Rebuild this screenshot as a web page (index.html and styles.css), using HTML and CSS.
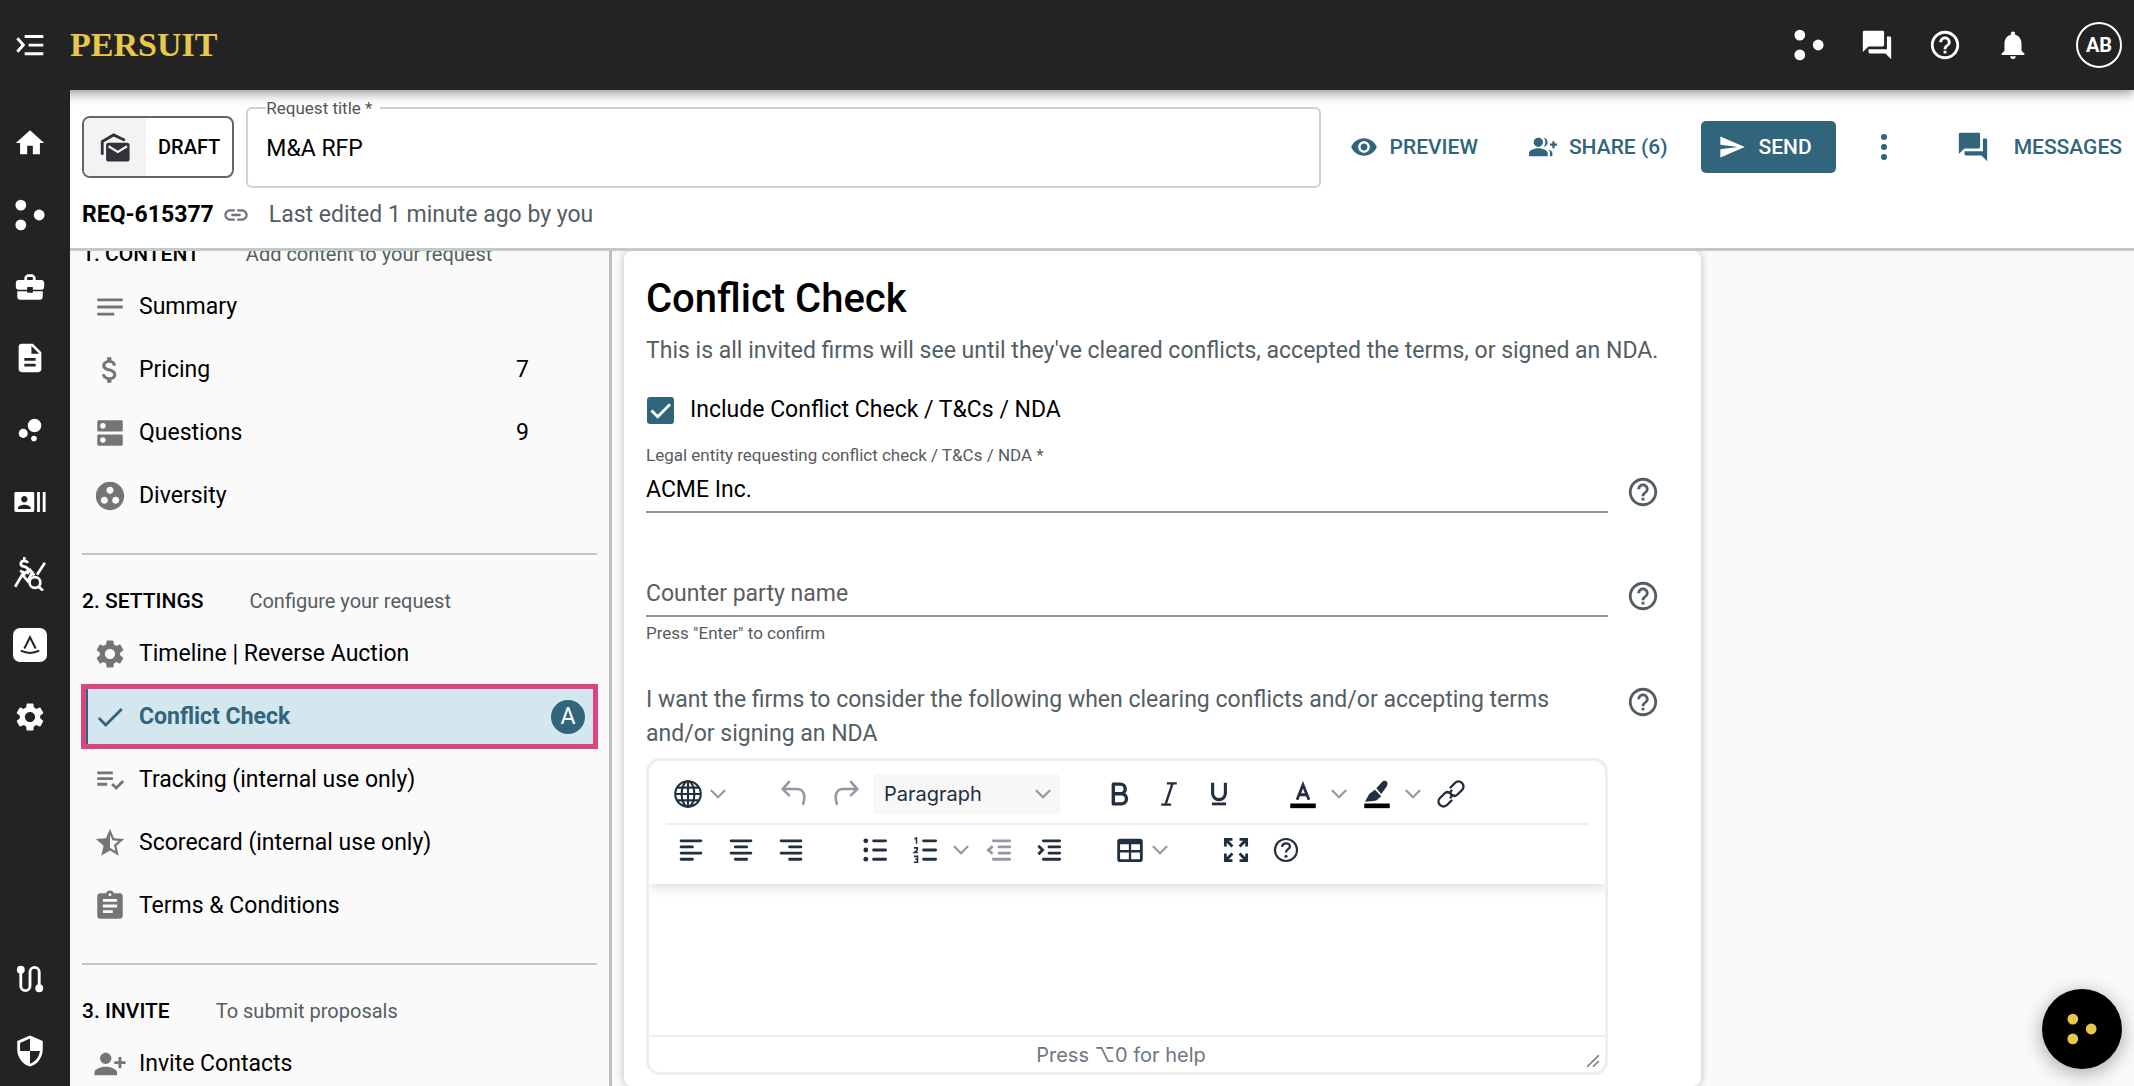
FILE: index.html
```html
<!DOCTYPE html>
<html lang="en">
<head>
    <meta charset="UTF-8">
    <meta name="viewport" content="width=device-width, initial-scale=1">
    <title>Conflict Check - M&amp;A RFP</title>
    <link rel="stylesheet" href="styles.css">
</head>
<body>
<!-- Icon sprite -->
<svg class="sprite" aria-hidden="true">
    <symbol id="i-menu" viewBox="0 0 24 24"><path d="M8 4.500h14v2.200H8zM11 11h11v2.200H11zM8 17.500h14v2.200H8z"/><path d="M2.500 7l4.500 5-4.500 5" fill="none" stroke="currentColor" stroke-width="2.200"/></symbol>
    <symbol id="i-home" viewBox="0 0 24 24"><path d="M10 20v-6h4v6h5v-8h3L12 3 2 12h3v8z"/></symbol>
    <symbol id="i-dots" viewBox="0 0 24 24"><circle cx="5.500" cy="5" r="3.800"/><circle cx="5.500" cy="19" r="3.800"/><circle cx="18.500" cy="12" r="3.800"/></symbol>
    <symbol id="i-case" viewBox="0 0 24 24"><path d="M10 16v-1H3.010L3 19c0 1.110.89 2 2 2h14c1.110 0 2-.89 2-2v-4h-7v1h-4zm10-9h-4.010V5l-2-2h-4l-2 2v2H4c-1.100 0-2 .9-2 2v3c0 1.110.89 2 2 2h6v-2h4v2h6c1.100 0 2-.9 2-2V9c0-1.100-.9-2-2-2zm-6 0h-4V5h4v2z"/></symbol>
    <symbol id="i-doc" viewBox="0 0 24 24"><path d="M14 2H6c-1.100 0-1.990.9-1.990 2L4 20c0 1.100.89 2 1.990 2H18c1.100 0 2-.9 2-2V8l-6-6zm2 16H8v-2h8v2zm0-4H8v-2h8v2zm-3-5V3.500L18.500 9H13z"/></symbol>
    <symbol id="i-bubbles" viewBox="0 0 24 24"><circle cx="7.200" cy="14.400" r="3.200"/><circle cx="14.800" cy="18" r="2"/><circle cx="15.200" cy="8.800" r="4.800"/></symbol>
    <symbol id="i-contacts" viewBox="0 0 24 24"><path d="M21 5v14h2V5h-2zm-4 14h2V5h-2v14zM14 5H2c-.55 0-1 .45-1 1v12c0 .55.45 1 1 1h12c.55 0 1-.45 1-1V6c0-.55-.45-1-1-1zM8 7.750c1.240 0 2.250 1.010 2.250 2.250S9.240 12.250 8 12.250 5.750 11.240 5.750 10 6.760 7.750 8 7.750zM12.500 17h-9v-.75c0-1.500 3-2.250 4.500-2.250s4.500.75 4.500 2.250V17z"/></symbol>
    <symbol id="i-insight" viewBox="0 0 24 24"><g fill="none" stroke="currentColor" stroke-width="1.900"><path d="M10.500 4.200Q9.800 2.800 8 2.800 5.500 2.900 5.500 4.800 5.600 6.400 8 6.800 10.600 7.300 10.600 9.200 10.500 11 8 11 6 11 5.300 9.400M8 0v3M8 11v2M1.500 21l5-8.500 4 4.500 3.500-7M10 12l2-3 3 4M17 12.500l5.500-8.500"/><circle cx="15.500" cy="18" r="3.800"/><path d="M18 20.800l3.200 3"/></g></symbol>
    <symbol id="i-brand" viewBox="0 0 24 24"><rect x="0" y="0" width="24" height="24" rx="5"/><path d="M8 14.500L12 6.500l4 8M5.500 16q6.500 3.200 13 0" fill="none" stroke="#232323" stroke-width="1.400"/></symbol>
    <symbol id="i-gear" viewBox="0 0 24 24"><path d="M19.140 12.940c.04-.3.06-.61.06-.94 0-.32-.02-.64-.07-.94l2.030-1.580c.18-.14.23-.41.12-.61l-1.920-3.320c-.12-.22-.37-.29-.59-.22l-2.390.96c-.5-.38-1.030-.7-1.620-.94l-.36-2.540c-.04-.24-.24-.41-.48-.41h-3.840c-.24 0-.43.17-.47.41l-.36 2.540c-.59.24-1.130.57-1.620.94l-2.390-.96c-.22-.08-.47 0-.59.22L2.740 8.870c-.12.21-.08.47.12.61l2.030 1.580c-.05.3-.09.63-.09.94s.02.64.07.94l-2.030 1.580c-.18.14-.23.41-.12.61l1.920 3.320c.12.22.37.29.59.22l2.390-.96c.5.38 1.030.7 1.620.94l.36 2.540c.05.24.24.41.48.41h3.840c.24 0 .44-.17.47-.41l.36-2.540c.59-.24 1.130-.56 1.620-.94l2.390.96c.22.08.47 0 .59-.22l1.920-3.320c.12-.22.07-.47-.12-.61l-2.010-1.580zM12 15.600c-1.980 0-3.600-1.620-3.600-3.600s1.620-3.600 3.600-3.600 3.600 1.620 3.600 3.600-1.620 3.600-3.600 3.600z"/></symbol>
    <symbol id="i-route" viewBox="0 0 24 24"><circle cx="5.500" cy="5.500" r="2.800"/><circle cx="18.500" cy="18.500" r="2.800"/><path d="M5.500 6v11a3.250 3.250 0 0 0 6.500 0V7a3.250 3.250 0 0 1 6.500 0v11" fill="none" stroke="currentColor" stroke-width="2"/></symbol>
    <symbol id="i-shield" viewBox="0 0 24 24"><path d="M12 1L3 5v6c0 5.550 3.840 10.740 9 12 5.160-1.260 9-6.450 9-12V5l-9-4zm0 10.990h7c-.53 4.120-3.280 7.790-7 8.940V12H5V6.300l7-3.110v8.800z"/></symbol>
    <symbol id="i-forum" viewBox="0 0 24 24"><path d="M21 6h-2v9H6v2c0 .55.45 1 1 1h11l4 4V7c0-.55-.45-1-1-1zm-4 6V3c0-.55-.45-1-1-1H3c-.55 0-1 .45-1 1v14l4-4h10c.55 0 1-.45 1-1z"/></symbol>
    <symbol id="i-help" viewBox="0 0 24 24"><path d="M11 18h2v-2h-2v2zm1-16C6.480 2 2 6.480 2 12s4.480 10 10 10 10-4.480 10-10S17.520 2 12 2zm0 18c-4.410 0-8-3.590-8-8s3.590-8 8-8 8 3.590 8 8-3.590 8-8 8zm0-14c-2.210 0-4 1.790-4 4h2c0-1.100.9-2 2-2s2 .9 2 2c0 2-3 1.750-3 5h2c0-2.250 3-2.500 3-5 0-2.210-1.790-4-4-4z"/></symbol>
    <symbol id="i-bell" viewBox="0 0 24 24"><path d="M12 22c1.100 0 2-.9 2-2h-4c0 1.100.89 2 2 2zm6-6v-5c0-3.070-1.640-5.640-4.500-6.320V4c0-.83-.67-1.500-1.500-1.500s-1.500.67-1.500 1.500v.68C7.630 5.360 6 7.920 6 11v5l-2 2v1h16v-1l-2-2z"/></symbol>
    <symbol id="i-draft" viewBox="0 0 24 24"><path d="M7.500 9h13a1.800 1.800 0 0 1 1.800 1.800v9.700a1.800 1.800 0 0 1-1.800 1.800h-13a1.800 1.800 0 0 1-1.800-1.800v-9.700A1.800 1.800 0 0 1 7.500 9z"/><path d="M7.500 11.500l6.500 4 6.500-4" fill="none" stroke="#f3f3f3" stroke-width="1.600"/><path d="M3 17.500V8.200L11 3.500l8 3.800" fill="none" stroke="currentColor" stroke-width="2"/></symbol>
    <symbol id="i-link" viewBox="0 0 24 24"><path d="M3.900 12c0-1.710 1.390-3.100 3.100-3.100h4V7H7c-2.760 0-5 2.240-5 5s2.240 5 5 5h4v-1.900H7c-1.710 0-3.100-1.390-3.100-3.100zM8 13h8v-2H8v2zm9-6h-4v1.900h4c1.710 0 3.100 1.390 3.100 3.100s-1.390 3.100-3.100 3.100h-4V17h4c2.760 0 5-2.240 5-5s-2.240-5-5-5z"/></symbol>
    <symbol id="i-eye" viewBox="0 0 24 24"><path d="M12 4.500C7 4.500 2.730 7.610 1 12c1.730 4.390 6 7.500 11 7.500s9.270-3.110 11-7.500c-1.730-4.390-6-7.500-11-7.500zM12 17c-2.760 0-5-2.240-5-5s2.240-5 5-5 5 2.240 5 5-2.240 5-5 5zm0-8c-1.660 0-3 1.340-3 3s1.340 3 3 3 3-1.340 3-3-1.340-3-3-3z"/></symbol>
    <symbol id="i-share" viewBox="0 0 24 24"><path d="M22 9V7h-2v2h-2v2h2v2h2v-2h2V9zM8 12c2.210 0 4-1.790 4-4s-1.790-4-4-4-4 1.790-4 4 1.790 4 4 4zm0 1c-2.670 0-8 1.340-8 4v3h16v-3c0-2.660-5.330-4-8-4zM12.510 4.050C13.430 5.110 14 6.490 14 8s-.57 2.890-1.490 3.950C14.470 11.700 16 10.040 16 8s-1.530-3.700-3.490-3.950zM16.530 13.830C17.420 14.660 18 15.700 18 17v3h2v-3c0-1.450-1.590-2.510-3.470-3.170z"/></symbol>
    <symbol id="i-send" viewBox="0 0 24 24"><path d="M2.010 21L23 12 2.010 3 2 10l15 2-15 2z"/></symbol>
    <symbol id="i-more" viewBox="0 0 24 24"><circle cx="12" cy="3.500" r="2.600"/><circle cx="12" cy="12" r="2.600"/><circle cx="12" cy="20.500" r="2.600"/></symbol>
    <symbol id="i-notes" viewBox="0 0 24 24"><path d="M3 18h12v-2H3v2zM3 6v2h18V6H3zm0 7h18v-2H3v2z"/></symbol>
    <symbol id="i-money" viewBox="0 0 24 24"><path d="M11.800 10.900c-2.270-.59-3-1.200-3-2.150 0-1.090 1.010-1.850 2.700-1.850 1.780 0 2.440.85 2.500 2.100h2.210c-.07-1.720-1.120-3.300-3.210-3.810V3h-3v2.160c-1.940.42-3.500 1.680-3.500 3.610 0 2.310 1.910 3.460 4.700 4.130 2.500.6 3 1.480 3 2.410 0 .69-.49 1.790-2.700 1.790-2.060 0-2.870-.92-2.980-2.100h-2.200c.12 2.190 1.760 3.420 3.680 3.830V21h3v-2.150c1.950-.37 3.500-1.500 3.500-3.550 0-2.840-2.430-3.810-4.700-4.400z"/></symbol>
    <symbol id="i-dns" viewBox="0 0 24 24"><path d="M20 13H4c-.55 0-1 .45-1 1v6c0 .55.45 1 1 1h16c.55 0 1-.45 1-1v-6c0-.55-.45-1-1-1zM7 19c-1.100 0-2-.9-2-2s.9-2 2-2 2 .9 2 2-.9 2-2 2zM20 3H4c-.55 0-1 .45-1 1v6c0 .55.45 1 1 1h16c.55 0 1-.45 1-1V4c0-.55-.45-1-1-1zM7 9c-1.100 0-2-.9-2-2s.9-2 2-2 2 .9 2 2-.9 2-2 2z"/></symbol>
    <symbol id="i-group" viewBox="0 0 24 24"><path d="M12 2C6.480 2 2 6.480 2 12s4.480 10 10 10 10-4.480 10-10S17.520 2 12 2zM8 17.500c-1.380 0-2.500-1.120-2.500-2.500s1.120-2.500 2.500-2.500 2.500 1.120 2.500 2.500-1.120 2.500-2.500 2.500zM9.500 8c0-1.380 1.120-2.500 2.500-2.500s2.500 1.120 2.500 2.500-1.120 2.500-2.500 2.500S9.500 9.380 9.500 8zm6.500 9.500c-1.380 0-2.500-1.120-2.500-2.500s1.120-2.500 2.500-2.500 2.500 1.120 2.500 2.500-1.120 2.500-2.500 2.500z"/></symbol>
    <symbol id="i-check" viewBox="0 0 24 24"><path d="M9 16.200L4.800 12l-1.400 1.400L9 19 21 7l-1.400-1.400L9 16.200z"/></symbol>
    <symbol id="i-tracking" viewBox="0 0 24 24"><path d="M3 10h11v2H3zM3 6h11v2H3zM3 14h7v2H3zM20.590 11.930l-4.250 4.240-2.120-2.120-1.410 1.410L16.340 19 22 13.340z"/></symbol>
    <symbol id="i-star" viewBox="0 0 24 24"><path d="M22 9.240l-7.190-.62L12 2 9.190 8.630 2 9.240l5.460 4.730L5.820 21 12 17.270 18.180 21l-1.630-7.030L22 9.240zM12 15.400V6.100l1.710 4.040 4.380.38-3.320 2.880 1 4.280L12 15.400z"/></symbol>
    <symbol id="i-assignment" viewBox="0 0 24 24"><path d="M19 3h-4.180C14.400 1.840 13.300 1 12 1c-1.300 0-2.400.84-2.820 2H5c-1.100 0-2 .9-2 2v14c0 1.100.9 2 2 2h14c1.100 0 2-.9 2-2V5c0-1.100-.9-2-2-2zm-7 0c.55 0 1 .45 1 1s-.45 1-1 1-1-.45-1-1 .45-1 1-1zm2 14H7v-2h7v2zm3-4H7v-2h10v2zm0-4H7V7h10v2z"/></symbol>
    <symbol id="i-person-add" viewBox="0 0 24 24"><path d="M9 12c2.210 0 4-1.790 4-4S11.210 4 9 4 5 5.790 5 8s1.790 4 4 4zm0 2c-2.670 0-8 1.340-8 4v2h16v-2c0-2.660-5.330-4-8-4zM20 10V7h-2v3h-3v2h3v3h2v-3h3v-2z"/></symbol>
    <!-- Editor icons -->
    <symbol id="e-chevron" viewBox="0 0 24 24"><path d="M6 9l6 6 6-6" fill="none" stroke="currentColor" stroke-width="2" stroke-linecap="round"/></symbol>
    <symbol id="e-globe" viewBox="0 0 24 24"><g fill="none" stroke="currentColor" stroke-width="1.500"><circle cx="12" cy="12" r="9"/><ellipse cx="12" cy="12" rx="4.500" ry="9"/><path d="M12 3v18M3 12h18M4.500 7.500h15M4.500 16.500h15"/></g></symbol>
    <symbol id="e-undo" viewBox="0 0 24 24"><path d="M8.500 3.500L4 8.500l4.500 4.500M4.500 8.500H14c4.500 0 6.500 4 4.500 10.500" fill="none" stroke="currentColor" stroke-width="1.800" stroke-linecap="round"/></symbol>
    <symbol id="e-redo" viewBox="0 0 24 24"><path d="M15.500 3.500L20 8.500 15.500 13M19.500 8.500H10C5.500 8.500 3.500 12.500 5.500 19" fill="none" stroke="currentColor" stroke-width="1.800" stroke-linecap="round"/></symbol>
    <symbol id="e-bold" viewBox="0 0 24 24"><path d="M8 5h5a3.400 3.400 0 0 1 0 6.800H8zM8 11.800h5.700a3.600 3.600 0 0 1 0 7.200H8z" fill="none" stroke="currentColor" stroke-width="2.400" stroke-linejoin="round"/></symbol>
    <symbol id="e-italic" viewBox="0 0 24 24"><path d="M10.500 4.500h7M6.500 19.500h7M14.500 4.500l-5 15" fill="none" stroke="currentColor" stroke-width="1.700"/></symbol>
    <symbol id="e-underline" viewBox="0 0 24 24"><path d="M7.500 4v7.500a4.500 4.500 0 0 0 9 0V4" fill="none" stroke="currentColor" stroke-width="2.200"/><path d="M7 18h10v2H7z"/></symbol>
    <symbol id="e-color" viewBox="0 0 24 24"><path d="M7.800 16L12 5.500 16.200 16M9.200 12.500h5.600" fill="none" stroke="currentColor" stroke-width="2"/><path d="M3 18.700h18V22H3z" fill="#000"/></symbol>
    <symbol id="e-marker" viewBox="0 0 24 24"><path d="M3.500 17.500l3-5.500 4-3 4.500 4.500-3.500 3-2 .5zM11.500 8l4.500-5 2-.5 1.500 1.500-.5 2.500-4 5.500z"/><path d="M3 18.700h18V22H3z" fill="#000"/></symbol>
    <symbol id="e-link" viewBox="0 0 24 24"><g transform="rotate(-45 12 12)" fill="none" stroke="currentColor" stroke-width="1.700" stroke-linecap="round"><path d="M9 15.500H4.500a3.500 3.500 0 0 1 0-7H9q3 0 3 3.500 0 1.500-2 1.500M15 8.500h4.500a3.500 3.500 0 0 1 0 7H15q-3 0-3-3.500 0-1.500 2-1.500"/></g></symbol>
    <symbol id="e-left" viewBox="0 0 24 24"><path d="M5 5.500h14M5 9.800h8M5 14.200h14M5 18.500h8" fill="none" stroke="currentColor" stroke-width="2" stroke-linecap="round"/></symbol>
    <symbol id="e-center" viewBox="0 0 24 24"><path d="M5 5.500h14M8 9.800h8M5 14.200h14M8 18.500h8" fill="none" stroke="currentColor" stroke-width="2" stroke-linecap="round"/></symbol>
    <symbol id="e-right" viewBox="0 0 24 24"><path d="M5 5.500h14M11 9.800h8M5 14.200h14M11 18.500h8" fill="none" stroke="currentColor" stroke-width="2" stroke-linecap="round"/></symbol>
    <symbol id="e-bullets" viewBox="0 0 24 24"><path d="M11 5.500h8.500M11 12h8.500M11 18.500h8.500" fill="none" stroke="currentColor" stroke-width="2" stroke-linecap="round"/><circle cx="5.500" cy="5.500" r="1.700"/><circle cx="5.500" cy="12" r="1.700"/><circle cx="5.500" cy="18.500" r="1.700"/></symbol>
    <symbol id="e-numbers" viewBox="0 0 24 24"><path d="M11 5.500h8.500M11 12h8.500M11 18.500h8.500" fill="none" stroke="currentColor" stroke-width="2" stroke-linecap="round"/><path d="M4.500 4L6 3.500V7.500M4.200 10.500h2.300V12l-2 1.800h2.500M4.200 16.500h2.500v2h-1.500M6.700 18.500v2.200H4.200" fill="none" stroke="currentColor" stroke-width="1.100"/></symbol>
    <symbol id="e-outdent" viewBox="0 0 24 24"><path d="M8 5.500h11.500M12 9.800h7.500M12 14.200h7.500M8 18.500h11.500" fill="none" stroke="currentColor" stroke-width="2" stroke-linecap="round"/><path d="M7.500 9.500L4.500 12l3 2.500" fill="none" stroke="currentColor" stroke-width="2"/></symbol>
    <symbol id="e-indent" viewBox="0 0 24 24"><path d="M8 5.500h11.500M12 9.800h7.500M12 14.200h7.500M8 18.500h11.500" fill="none" stroke="currentColor" stroke-width="2" stroke-linecap="round"/><path d="M4.500 9L7.500 12l-3 3" fill="none" stroke="currentColor" stroke-width="2"/></symbol>
    <symbol id="e-table" viewBox="0 0 24 24"><path d="M5 4h14a2 2 0 0 1 2 2v12.500a2 2 0 0 1-2 2H5a2 2 0 0 1-2-2V6a2 2 0 0 1 2-2zM5 8v4h6.200V8zM12.800 8v4H19V8zM5 13.800v4.700h6.200v-4.700zM12.800 13.800v4.700H19v-4.700z" fill-rule="evenodd"/></symbol>
    <symbol id="e-full" viewBox="0 0 24 24"><path d="M9.500 4.500h-5v5M4.500 4.500l5 5M14.500 4.500h5v5M19.500 4.500l-5 5M4.500 14.500v5h5M4.500 19.500l5-5M19.500 14.500v5h-5M19.500 19.500l-5-5" fill="none" stroke="currentColor" stroke-width="2"/></symbol>
    <symbol id="e-help" viewBox="0 0 24 24"><circle cx="12" cy="12" r="7.800" fill="none" stroke="currentColor" stroke-width="1.500"/><path d="M9.200 9.800c.2-3.300 5.600-3.300 5.600-.3 0 2-2.800 1.900-2.800 4.200" fill="none" stroke="currentColor" stroke-width="1.600"/><circle cx="12" cy="16.400" r="1.100"/></symbol>
</svg>

<header class="topbar">
    <button class="menu-toggle" aria-label="Open menu"><svg class="icon"><use href="#i-menu"/></svg></button>
    <a class="logo" href="#">PERSUIT</a>
    <div class="topbar-actions">
        <button aria-label="Apps"><svg class="icon"><use href="#i-dots"/></svg></button>
        <button aria-label="Messages"><svg class="icon"><use href="#i-forum"/></svg></button>
        <button aria-label="Help"><svg class="icon"><use href="#i-help"/></svg></button>
        <button aria-label="Notifications"><svg class="icon"><use href="#i-bell"/></svg></button>
    </div>
    <button class="avatar">AB</button>
</header>

<div class="shell">
    <nav class="rail" aria-label="Main">
        <div class="rail-main">
            <a href="#" aria-label="Home"><svg class="icon"><use href="#i-home"/></svg></a>
            <a href="#" aria-label="Requests"><svg class="icon"><use href="#i-dots"/></svg></a>
            <a href="#" aria-label="Matters"><svg class="icon"><use href="#i-case"/></svg></a>
            <a href="#" aria-label="Documents"><svg class="icon"><use href="#i-doc"/></svg></a>
            <a href="#" aria-label="Insights"><svg class="icon"><use href="#i-bubbles"/></svg></a>
            <a href="#" aria-label="Contacts"><svg class="icon"><use href="#i-contacts"/></svg></a>
            <a href="#" aria-label="Rates"><svg class="icon"><use href="#i-insight"/></svg></a>
            <a href="#" aria-label="Assistant"><svg class="icon"><use href="#i-brand"/></svg></a>
            <a href="#" aria-label="Settings"><svg class="icon"><use href="#i-gear"/></svg></a>
        </div>
        <div class="rail-bottom">
            <a href="#" aria-label="Workflows"><svg class="icon"><use href="#i-route"/></svg></a>
            <a href="#" aria-label="Admin"><svg class="icon"><use href="#i-shield"/></svg></a>
        </div>
    </nav>

    <div class="page">
        <div class="request-header">
            <div class="request-bar">
                <div class="status">
                    <span class="status-icon"><svg class="icon"><use href="#i-draft"/></svg></span>
                    <span class="status-text">DRAFT</span>
                </div>
                <fieldset class="title-field">
                    <legend><label for="title">Request title *</label></legend>
                    <input id="title" type="text" value="M&amp;A RFP">
                </fieldset>
                <div class="actions">
                    <button class="action"><svg class="icon"><use href="#i-eye"/></svg>PREVIEW</button>
                    <button class="action"><svg class="icon"><use href="#i-share"/></svg>SHARE (6)</button>
                    <button class="action send"><svg class="icon"><use href="#i-send"/></svg>SEND</button>
                    <button class="action more" aria-label="More"><svg class="icon"><use href="#i-more"/></svg></button>
                    <button class="action messages"><svg class="icon"><use href="#i-forum"/></svg>MESSAGES</button>
                </div>
            </div>
            <div class="request-meta">
                <strong>REQ-615377</strong>
                <svg class="icon"><use href="#i-link"/></svg>
                <span>Last edited 1 minute ago by you</span>
            </div>
        </div>

        <div class="columns">
            <nav class="steps" aria-label="Request sections">
                <section class="step-group">
                    <h2>1. CONTENT <small>Add content to your request</small></h2>
                    <a class="step" href="#"><svg class="icon"><use href="#i-notes"/></svg>Summary</a>
                    <a class="step" href="#"><svg class="icon"><use href="#i-money"/></svg>Pricing<span class="count">7</span></a>
                    <a class="step" href="#"><svg class="icon"><use href="#i-dns"/></svg>Questions<span class="count">9</span></a>
                    <a class="step" href="#"><svg class="icon"><use href="#i-group"/></svg>Diversity</a>
                </section>
                <section class="step-group">
                    <h2>2. SETTINGS <small>Configure your request</small></h2>
                    <a class="step" href="#"><svg class="icon"><use href="#i-gear"/></svg>Timeline | Reverse Auction</a>
                    <a class="step active" href="#"><svg class="icon"><use href="#i-check"/></svg>Conflict Check<span class="badge">A</span></a>
                    <a class="step" href="#"><svg class="icon"><use href="#i-tracking"/></svg>Tracking (internal use only)</a>
                    <a class="step" href="#"><svg class="icon"><use href="#i-star"/></svg>Scorecard (internal use only)</a>
                    <a class="step" href="#"><svg class="icon"><use href="#i-assignment"/></svg>Terms &amp; Conditions</a>
                </section>
                <section class="step-group">
                    <h2>3. INVITE <small>To submit proposals</small></h2>
                    <a class="step" href="#"><svg class="icon"><use href="#i-person-add"/></svg>Invite Contacts</a>
                </section>
            </nav>

            <main class="content">
                <div class="card">
                    <h1>Conflict Check</h1>
                    <p class="intro">This is all invited firms will see until they've cleared conflicts, accepted the terms, or signed an NDA.</p>
                    <label class="include"><input type="checkbox" checked>Include Conflict Check / T&amp;Cs / NDA</label>

                    <div class="row entity">
                        <div class="field">
                            <label for="entity">Legal entity requesting conflict check / T&amp;Cs / NDA *</label>
                            <input id="entity" type="text" value="ACME Inc.">
                        </div>
                        <button class="help" aria-label="Help"><svg class="icon"><use href="#i-help"/></svg></button>
                    </div>

                    <div class="row party">
                        <div class="field">
                            <input id="party" type="text" placeholder="Counter party name" aria-label="Counter party name">
                            <label for="party">Press "Enter" to confirm</label>
                        </div>
                        <button class="help" aria-label="Help"><svg class="icon"><use href="#i-help"/></svg></button>
                    </div>

                    <div class="row">
                        <div class="field">
                            <label class="prompt" for="terms">I want the firms to consider the following when clearing conflicts and/or accepting terms and/or signing an NDA</label>
                            <div class="editor">
                                <div class="toolbar">
                                    <div class="toolbar-row">
                                        <div class="tools">
                                            <button class="tool menu" aria-label="Language"><svg><use href="#e-globe"/></svg><svg class="chevron"><use href="#e-chevron"/></svg></button>
                                        </div>
                                        <div class="tools history">
                                            <button class="tool" aria-label="Undo" disabled><svg><use href="#e-undo"/></svg></button>
                                            <button class="tool" aria-label="Redo" disabled><svg><use href="#e-redo"/></svg></button>
                                            <button class="format">Paragraph<svg class="chevron"><use href="#e-chevron"/></svg></button>
                                        </div>
                                        <div class="tools">
                                            <button class="tool" aria-label="Bold"><svg><use href="#e-bold"/></svg></button>
                                            <button class="tool" aria-label="Italic"><svg><use href="#e-italic"/></svg></button>
                                            <button class="tool" aria-label="Underline"><svg><use href="#e-underline"/></svg></button>
                                        </div>
                                        <div class="tools">
                                            <button class="tool" aria-label="Text color"><svg><use href="#e-color"/></svg></button>
                                            <button class="split" aria-label="Text colors"><svg class="chevron"><use href="#e-chevron"/></svg></button>
                                            <button class="tool" aria-label="Background color"><svg><use href="#e-marker"/></svg></button>
                                            <button class="split" aria-label="Background colors"><svg class="chevron"><use href="#e-chevron"/></svg></button>
                                            <button class="tool" aria-label="Link"><svg><use href="#e-link"/></svg></button>
                                        </div>
                                    </div>
                                    <div class="toolbar-row">
                                        <div class="tools">
                                            <button class="tool" aria-label="Align left"><svg><use href="#e-left"/></svg></button>
                                            <button class="tool" aria-label="Align center"><svg><use href="#e-center"/></svg></button>
                                            <button class="tool" aria-label="Align right"><svg><use href="#e-right"/></svg></button>
                                        </div>
                                        <div class="tools">
                                            <button class="tool" aria-label="Bullet list"><svg><use href="#e-bullets"/></svg></button>
                                            <button class="tool" aria-label="Numbered list"><svg><use href="#e-numbers"/></svg></button>
                                            <button class="split" aria-label="List styles"><svg class="chevron"><use href="#e-chevron"/></svg></button>
                                            <button class="tool" aria-label="Outdent" disabled><svg><use href="#e-outdent"/></svg></button>
                                            <button class="tool" aria-label="Indent"><svg><use href="#e-indent"/></svg></button>
                                        </div>
                                        <div class="tools">
                                            <button class="tool menu" aria-label="Table"><svg><use href="#e-table"/></svg><svg class="chevron"><use href="#e-chevron"/></svg></button>
                                        </div>
                                        <div class="tools">
                                            <button class="tool" aria-label="Fullscreen"><svg><use href="#e-full"/></svg></button>
                                            <button class="tool" aria-label="Editor help"><svg><use href="#e-help"/></svg></button>
                                        </div>
                                    </div>
                                </div>
                                <textarea id="terms"></textarea>
                                <div class="statusbar">
                                    Press ⌥0 for help
                                    <svg class="grip" viewBox="0 0 12 12"><path d="M1 11L11 1M6 11l5-5" fill="none" stroke="currentColor" stroke-width="1.300"/></svg>
                                </div>
                            </div>
                        </div>
                        <button class="help" aria-label="Help"><svg class="icon"><use href="#i-help"/></svg></button>
                    </div>
                </div>
            </main>
        </div>
    </div>
</div>

<button class="launcher" aria-label="Open assistant"><svg class="icon"><use href="#i-dots"/></svg></button>
</body>
</html>
```

FILE: styles.css
```css
* {
    box-sizing: border-box;
}

body {
    display: flex;
    flex-direction: column;
    height: 100vh;
    margin: 0;
    overflow: hidden;
    font-family: Roboto, "Liberation Sans", sans-serif;
    font-size: 23px;
    line-height: 34px;
    color: #000;
    background-color: #fafafa;
}

button,
input,
textarea {
    font: inherit;
    color: inherit;
    border: 0;
    padding: 0;
    background: none;
    outline: 0;
}

a {
    color: inherit;
    text-decoration: none;
}

svg {
    display: block;
    flex: none;
    fill: currentColor;
}

.sprite {
    position: absolute;
    width: 0;
    height: 0;
}

.icon {
    width: 34px;
    height: 34px;
}

/* Top bar */
.topbar {
    position: relative;
    z-index: 2;
    display: flex;
    flex: none;
    align-items: center;
    height: 90px;
    padding-right: 12px;
    color: #fff;
    background-color: #232323;
    box-shadow: 0 2px 12px rgba(0, 0, 0, 0.5);
}

.menu-toggle {
    display: flex;
    justify-content: center;
    width: 60px;
    margin-right: 10px;
}

.menu-toggle .icon {
    width: 32px;
    height: 32px;
}

.logo {
    font-family: "Liberation Serif", serif;
    font-size: 34px;
    font-weight: bold;
    color: #e7c84b;
}

.topbar-actions {
    display: flex;
    gap: 34px;
    margin-left: auto;
    margin-right: 46px;
}

.avatar {
    width: 46px;
    height: 46px;
    border: 2px solid #fff;
    border-radius: 50%;
    font-size: 20px;
    font-weight: 700;
    line-height: 40px;
}

/* Icon rail */
.shell {
    display: flex;
    flex: 1;
    min-height: 0;
}

.rail {
    position: relative;
    z-index: 3;
    display: flex;
    flex: none;
    flex-direction: column;
    justify-content: space-between;
    width: 70px;
    padding: 36px 10px 18px 0;
    color: #fff;
    background-color: #232323;
}

.rail a {
    display: flex;
    justify-content: center;
}

.rail-main {
    display: flex;
    flex-direction: column;
    justify-content: space-between;
    height: 608px;
}

.rail-bottom {
    display: flex;
    flex-direction: column;
    gap: 38px;
}

/* Request header */
.page {
    display: flex;
    flex: 1;
    flex-direction: column;
    min-width: 0;
}

.request-header {
    flex: none;
    height: 161px;
    padding: 8px 12px 0;
    border-bottom: 3px solid #c0cac7;
    background-color: #fff;
}

.request-bar {
    display: flex;
    align-items: center;
    gap: 12px;
}

.status {
    display: flex;
    margin-top: 8px;
    height: 62px;
    border: 2px solid #666;
    border-radius: 8px;
    overflow: hidden;
}

.status-icon {
    display: flex;
    align-items: center;
    justify-content: center;
    width: 62px;
    color: #323238;
    background-color: #f3f3f3;
}

.status-text {
    padding: 0 12px;
    font-size: 20px;
    font-weight: 500;
    line-height: 58px;
}

.title-field {
    flex: 1;
    min-width: 0;
    height: 90px;
    margin: 0;
    padding: 0 18px;
    border: 2px solid #d0d0d0;
    border-radius: 6px;
}

.title-field legend {
    padding: 0 8px 0 0;
    font-size: 17px;
    line-height: 20px;
    color: #555;
}

.title-field input {
    width: 100%;
    height: 60px;
}

.actions {
    display: flex;
    align-items: center;
    gap: 17px;
    margin-top: 8px;
    color: #30657b;
}

.action {
    display: flex;
    align-items: center;
    gap: 12px;
    height: 52px;
    padding: 0 17px;
    font-size: 21px;
    font-weight: 500;
}

.action .icon {
    width: 28px;
    height: 28px;
}

.action.send {
    padding-right: 24px;
    border-radius: 5px;
    color: #fff;
    background-color: #30657b;
}

.action.messages {
    gap: 24px;
    padding-left: 24px;
    padding-right: 0;
}

.action.messages .icon {
    width: 34px;
    height: 34px;
}

.request-meta {
    display: flex;
    align-items: center;
    margin-top: 10px;
    color: #535e63;
}

.request-meta strong {
    color: #000;
}

.request-meta .icon {
    width: 28px;
    height: 28px;
    margin: 0 19px 0 8px;
    color: #77717c;
}

/* Section steps */
.columns {
    display: flex;
    flex: 1;
    min-height: 0;
}

.steps {
    flex: none;
    width: 542px;
    padding: 0 12px;
    border-right: 3px solid #bdbdc7;
    overflow: hidden;
}

/* list is scrolled slightly under the header */
.step-group:first-child {
    margin-top: -17px;
}

.step-group + .step-group {
    margin-top: 26px;
    padding-top: 26px;
    border-top: 2px solid #c2c3cb;
}

.step-group h2 {
    display: flex;
    gap: 46px;
    margin: 0;
    font-size: 21px;
    font-weight: 500;
    line-height: 41px;
}

.step-group small {
    font-size: 20px;
    font-weight: 400;
    color: #535e63;
}

.step {
    display: flex;
    align-items: center;
    gap: 12px;
    height: 63px;
    padding: 0 12px 0 11px;
}

.step .icon {
    color: #757575;
}

.count {
    margin-left: auto;
    margin-right: 56px;
}

.step.active {
    outline: 5px solid #da467d;
    outline-offset: -4px;
    font-weight: 700;
    color: #30657b;
    background-color: #d5e7ee;
    box-shadow: inset 6px 0 #30657b;
}

.step.active .icon {
    color: inherit;
}

.badge {
    width: 34px;
    height: 34px;
    margin-left: auto;
    border-radius: 50%;
    font-weight: 400;
    text-align: center;
    color: #fff;
    background-color: #30657b;
}

/* Conflict check form */
.content {
    flex: 1;
    min-width: 0;
    padding-left: 12px;
    overflow: hidden;
}

.card {
    max-width: 1077px;
    min-height: 100%;
    padding: 23px 35px 0 22px;
    border-radius: 8px;
    background-color: #fff;
    box-shadow: 0 0 8px rgba(0, 0, 0, 0.25);
}

.card h1 {
    margin: 0;
    font-size: 40px;
    font-weight: 500;
    line-height: 50px;
}

.intro {
    margin: 10px 0 25px;
    color: #535e63;
}

.include {
    display: flex;
    align-items: center;
    gap: 16px;
}

.include input {
    appearance: none;
    width: 27px;
    height: 27px;
    margin: 0 0 0 1px;
    border-radius: 3px;
    background: #30657b url('data:image/svg+xml,<svg xmlns="http://www.w3.org/2000/svg" viewBox="0 0 24 24"><path d="M4 12l5.500 5.500L20.500 6.500" fill="none" stroke="white" stroke-width="2.500"/></svg>');
}

.row {
    display: flex;
    gap: 18px;
    padding-right: 6px;
}

.field {
    flex: 1;
    min-width: 0;
}

.field label {
    display: block;
    margin-top: 16px;
    font-size: 17px;
    line-height: 24px;
    color: #555b60;
}

.field input {
    width: 100%;
    height: 46px;
    border-bottom: 2px solid #949494;
}

.field input::placeholder {
    color: #5c5c62;
    opacity: 1;
}

.help {
    align-self: flex-start;
    margin-top: 40px;
    color: #535e63;
}

.entity .help {
    margin-top: 48px;
}

.party {
    margin-top: 58px;
}

.party .help {
    margin-top: 8px;
}

.party label {
    margin-top: 4px;
}

.field .prompt {
    margin-top: 38px;
    font-size: 23px;
    line-height: 34px;
    color: #535e63;
}

/* Rich text editor */
.editor {
    margin-top: 7px;
    border: 3px solid #eee;
    border-radius: 14px;
    font-family: Inter, Roboto, sans-serif;
    color: #222f3e;
    overflow: hidden;
}

.toolbar {
    padding: 4px 17px 9px;
    box-shadow: 0 3px 12px rgba(0, 0, 0, 0.15);
}

.toolbar-row {
    display: flex;
    align-items: center;
    gap: 34px;
    height: 58px;
}

.toolbar-row + .toolbar-row {
    height: 52px;
    border-top: 2px solid #eee;
}

.tools {
    display: flex;
    align-items: center;
}

.tools.history {
    gap: 2px;
}

.tool {
    display: flex;
    align-items: center;
    justify-content: center;
    width: 50px;
    height: 40px;
}

.tool svg {
    width: 34px;
    height: 34px;
}

.tool.menu {
    width: 69px;
}

.tool:disabled {
    color: #9299a2;
}

.tools .chevron {
    width: 26px;
    height: 26px;
    color: #9299a2;
}

.split {
    display: flex;
    justify-content: center;
    width: 22px;
    margin-right: 2px;
}

.format {
    display: flex;
    align-items: center;
    justify-content: space-between;
    width: 187px;
    height: 40px;
    padding: 0 4px 0 11px;
    border-radius: 4px;
    font-size: 20px;
    background-color: #f7f7f7;
}

.editor textarea {
    display: block;
    width: 100%;
    height: 151px;
    resize: none;
}

.statusbar {
    position: relative;
    display: flex;
    align-items: center;
    justify-content: center;
    height: 37px;
    padding-right: 12px;
    border-top: 2px solid #eee;
    font-size: 20px;
    color: #6f7680;
}

.grip {
    position: absolute;
    right: 5px;
    bottom: 4px;
    width: 14px;
    height: 14px;
}

/* Floating launcher */
.launcher {
    position: fixed;
    right: 12px;
    bottom: 17px;
    z-index: 4;
    display: flex;
    align-items: center;
    justify-content: center;
    width: 80px;
    height: 80px;
    border-radius: 50%;
    color: #e7c84b;
    background-color: #000;
    box-shadow: 0 4px 20px rgba(0, 0, 0, 0.35);
}
```
